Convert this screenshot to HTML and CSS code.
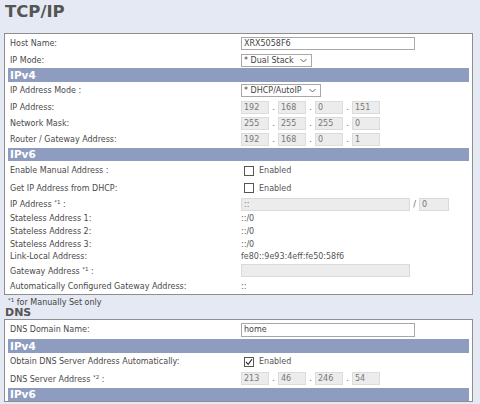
FILE: index.html
```html
<!DOCTYPE html>
<html>
<head>
<meta charset="utf-8">
<link rel="stylesheet" href="styles.css">
</head>
<body>
<h1 class="title">TCP/IP</h1>
<div class="box">
  <div class="row h18"><span class="lbl">Host Name:</span><span class="field long">XRX5058F6</span></div>
  <div class="row h16"><span class="lbl">IP Mode:</span><span class="select w71">* Dual Stack<svg class="chev" width="7" height="5" viewBox="0 0 7 5"><polyline points="0.5,1 3.5,4 6.5,1" fill="none" stroke="#666" stroke-width="1"/></svg></span></div>
  <div class="bar">IPv4</div>
  <div class="row h17"><span class="lbl">IP Address Mode :</span><span class="select w80">* DHCP/AutoIP<svg class="chev" width="7" height="5" viewBox="0 0 7 5"><polyline points="0.5,1 3.5,4 6.5,1" fill="none" stroke="#666" stroke-width="1"/></svg></span></div>
  <div class="row h16"><span class="lbl">IP Address:</span><span class="ip">192</span><span class="dot">.</span><span class="ip">168</span><span class="dot">.</span><span class="ip">0</span><span class="dot">.</span><span class="ip">151</span></div>
  <div class="row h16"><span class="lbl">Network Mask:</span><span class="ip">255</span><span class="dot">.</span><span class="ip">255</span><span class="dot">.</span><span class="ip">255</span><span class="dot">.</span><span class="ip">0</span></div>
  <div class="row h16"><span class="lbl">Router / Gateway Address:</span><span class="ip">192</span><span class="dot">.</span><span class="ip">168</span><span class="dot">.</span><span class="ip">0</span><span class="dot">.</span><span class="ip">1</span></div>
  <div class="bar gap">IPv6</div>
  <div class="row h19"><span class="lbl">Enable Manual Address :</span><span class="cb"></span><span class="cbl">Enabled</span></div>
  <div class="row h16"><span class="lbl">Get IP Address from DHCP:</span><span class="cb"></span><span class="cbl">Enabled</span></div>
  <div class="row h16"><span class="lbl">IP Address <span class="sup">*1</span> :</span><span class="field dis v6">::</span><span class="slash">/</span><span class="field dis pre">0</span></div>
  <div class="row h13"><span class="lbl">Stateless Address 1:</span><span class="txt">::/0</span></div>
  <div class="row h13"><span class="lbl">Stateless Address 2:</span><span class="txt">::/0</span></div>
  <div class="row h12"><span class="lbl">Stateless Address 3:</span><span class="txt">::/0</span></div>
  <div class="row h12"><span class="lbl">Link-Local Address:</span><span class="txt">fe80::9e93:4eff:fe50:58f6</span></div>
  <div class="row h17"><span class="lbl">Gateway Address <span class="sup">*1</span> :</span><span class="field dis v6"></span></div>
  <div class="row h15"><span class="lbl">Automatically Configured Gateway Address:</span><span class="txt">::</span></div>
</div>
<div class="note"><span class="sup">*1</span> for Manually Set only</div>
<h2 class="heading">DNS</h2>
<div class="box">
  <div class="row h19"><span class="lbl">DNS Domain Name:</span><span class="field long tall">home</span></div>
  <div class="bar">IPv4</div>
  <div class="row h17"><span class="lbl">Obtain DNS Server Address Automatically:</span><span class="cb"><svg width="8" height="8" viewBox="0 0 8 8"><polyline points="1,4 3.2,6.3 7,1.2" fill="none" stroke="#333" stroke-width="1.1"/></svg></span><span class="cbl">Enabled</span></div>
  <div class="row h17"><span class="lbl">DNS Server Address <span class="sup">*2</span> :</span><span class="ip">213</span><span class="dot">.</span><span class="ip">46</span><span class="dot">.</span><span class="ip">246</span><span class="dot">.</span><span class="ip">54</span></div>
  <div class="bar gap">IPv6</div>
</div>
</body>
</html>
```
FILE: styles.css
```css
html, body {
  margin: 0;
  padding: 0;
}
body {
  width: 480px;
  height: 404px;
  overflow: hidden;
  background: #e4e9f3;
  font-family: "DejaVu Sans", Verdana, sans-serif;
  font-size: 8px;
  color: #4a4a4a;
}
.title {
  margin: 0;
  padding: 1px 0 0 5px;
  height: 22px;
  line-height: 22px;
  font-size: 16.5px;
  font-weight: bold;
  color: #555;
}
.box {
  box-sizing: border-box;
  width: 469px;
  margin: 10px 0 0 4px;
  padding: 0 3px;
  background: #fff;
  border: 1px solid #8e8e8e;
}
.row {
  display: flex;
  align-items: center;
}
.h12 { height: 12px; }
.h13 { height: 13px; }
.h15 { height: 15px; }
.h16 { height: 16px; }
.h17 { height: 17px; }
.h18 { height: 18px; }
.h19 { height: 19px; }
.lbl {
  flex: none;
  width: 231px;
  padding-left: 2px;
  white-space: nowrap;
}
.sup {
  font-size: 5.5px;
  vertical-align: 3px;
}
.bar {
  height: 14px;
  line-height: 14px;
  padding-left: 2px;
  background: #8e9dbf;
  color: #fff;
  font-weight: bold;
  font-size: 10.5px;
}
.bar.gap {
  height: 13px;
  line-height: 13px;
  margin-top: 1px;
}
.field {
  box-sizing: border-box;
  height: 13px;
  line-height: 11px;
  padding-left: 2px;
  border: 1px solid #a8a8a8;
  background: #fff;
  color: #444;
}
.field.long { width: 174px; }
.field.tall { height: 14px; line-height: 12px; }
.field.dis {
  background: #ececec;
  border-color: #dadada;
  color: #777;
}
.field.v6 { width: 169px; }
.field.pre { width: 30px; }
.slash {
  width: 9px;
  text-align: center;
  color: #666;
}
.select {
  box-sizing: border-box;
  height: 13px;
  display: flex;
  align-items: center;
  padding-left: 2px;
  border: 1px solid #a8a8a8;
  background: #fff;
  color: #444;
  white-space: nowrap;
}
.select.w71 { width: 71px; }
.select.w80 { width: 80px; }
.chev {
  margin-left: auto;
  margin-right: 4px;
}
.ip {
  box-sizing: border-box;
  width: 28px;
  height: 13px;
  line-height: 11px;
  padding-left: 2px;
  background: #ececec;
  border: 1px solid #dcdcdc;
  color: #777;
}
.dot {
  width: 9px;
  text-align: center;
  color: #666;
}
.cb {
  box-sizing: border-box;
  width: 10px;
  height: 10px;
  margin-left: 3px;
  margin-right: 5px;
  border: 1px solid #555;
  background: #fff;
  display: flex;
  align-items: center;
  justify-content: center;
}
.cbl {
  color: #555;
}
.txt {
  color: #555;
}
.note {
  height: 11px;
  line-height: 11px;
  padding-left: 8px;
  color: #444;
}
.heading {
  margin: 0;
  height: 13px;
  line-height: 13px;
  padding-left: 5px;
  font-size: 11px;
  font-weight: bold;
  color: #555;
}
.heading + .box {
  margin-top: 0;
}
```
